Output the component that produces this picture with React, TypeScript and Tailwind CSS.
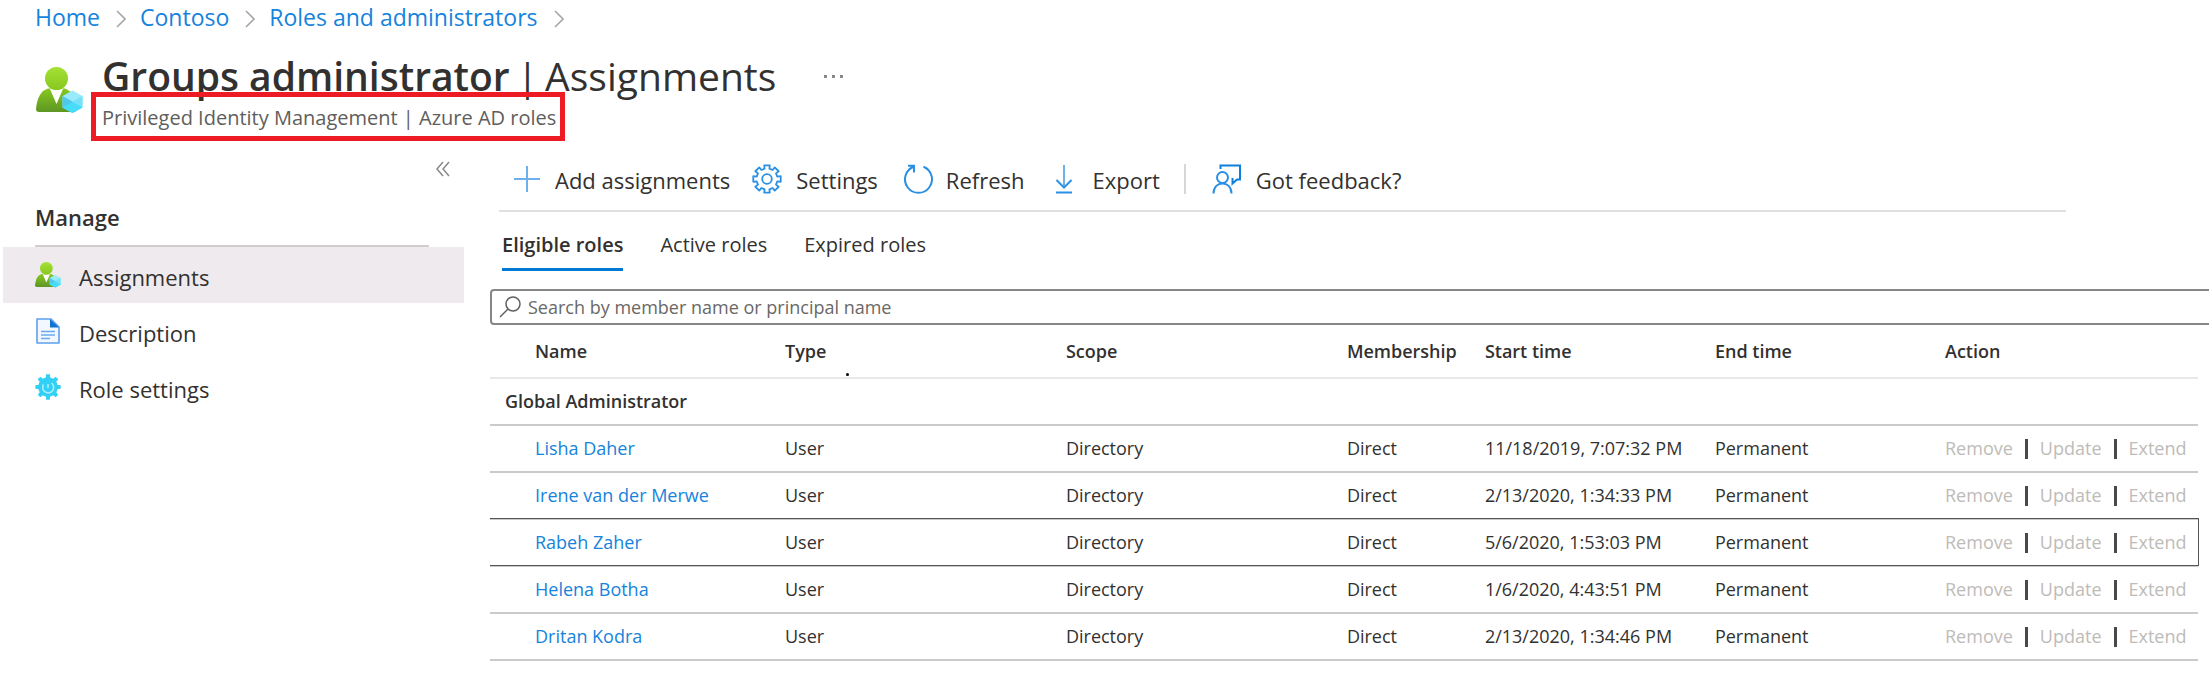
import type { ReactNode } from "react";

const crumbs = ["Home", "Contoso", "Roles and administrators"];

const members = [
  { name: "Lisha Daher", start: "11/18/2019, 7:07:32 PM" },
  { name: "Irene van der Merwe", start: "2/13/2020, 1:34:33 PM" },
  { name: "Rabeh Zaher", start: "5/6/2020, 1:53:03 PM", focused: true },
  { name: "Helena Botha", start: "1/6/2020, 4:43:51 PM" },
  { name: "Dritan Kodra", start: "2/13/2020, 1:34:46 PM" },
];

function gearPath(teeth: number, outer: number, inner: number, c: number, half: number, slope: number) {
  const pts: string[] = [];
  for (let i = 0; i < teeth; i++) {
    const a = (i * 2 * Math.PI) / teeth - Math.PI / 2;
    const at = (r: number, t: number) => `${(c + r * Math.cos(t)).toFixed(2)} ${(c + r * Math.sin(t)).toFixed(2)}`;
    pts.push(at(inner, a - half - slope), at(outer, a - half), at(outer, a + half), at(inner, a + half + slope));
  }
  return `M${pts.join("L")}Z`;
}

function PersonIcon({ id, className }: { id: string; className: string }) {
  return (
    <svg viewBox="0 0 47 47" className={className} aria-hidden="true">
      <defs>
        <linearGradient id={id} x1="0" y1="0" x2="0" y2="1">
          <stop offset="0" stopColor="#86c81f" />
          <stop offset="1" stopColor="#5e9624" />
        </linearGradient>
        <linearGradient id={`${id}-head`} x1="0" y1="0" x2="0" y2="1">
          <stop offset="0" stopColor="#a6e035" />
          <stop offset="1" stopColor="#86c81f" />
        </linearGradient>
      </defs>
      <path d="M0 42C1 32 4 24 12 21.500H29C36 24 40 32 41 42Q41 45 38 45H3Q0 45 0 42Z" fill={`url(#${id})`} />
      <path d="M14 22H27L20.500 37Z" fill="#fff" />
      <circle cx="20.500" cy="11.500" r="11.500" fill={`url(#${id}-head)`} />
      <path d="M36.500 23.500L46.500 29V40.500L36.500 46L26.500 40.500V29Z" fill="#9aeaf9" />
      <path d="M26.500 29L36.500 34.500V46L26.500 40.500Z" fill="#50c8ec" />
      <path d="M36.500 34.500L46.500 29V40.500L36.500 46Z" fill="#74e2f8" />
      <path d="M26.500 40.500L36.500 35L46.500 40.500L36.500 46Z" fill="#46dcfa" />
    </svg>
  );
}

function Chevron() {
  return (
    <svg viewBox="0 0 10 18" className="ml-4 mr-3.5 mt-1 h-[18px] w-2.5" fill="none" stroke="#a8a6a4" strokeWidth="1.600" aria-hidden="true">
      <path d="M1 1L9 9L1 17" />
    </svg>
  );
}

function Tool({ icon, label, className = "" }: { icon: ReactNode; label: string; className?: string }) {
  return (
    <button type="button" className={`flex items-center text-[22px] leading-8 whitespace-nowrap ${className}`}>
      {icon}
      <span className="mt-0.5">{label}</span>
    </button>
  );
}

const stroke = { fill: "none", stroke: "#2b8fe3", strokeWidth: 2, "aria-hidden": true } as const;

export default function App() {
  return (
    <div className="overflow-x-hidden bg-white font-['Open_Sans','Noto_Sans',sans-serif] text-[#323130]">
      <nav aria-label="Breadcrumb" className="flex items-center pl-[35px] text-[23px] leading-[34px] text-[#1683dc]">
        {crumbs.map((c) => (
          <span key={c} className="flex items-center">
            <a href="#">{c}</a>
            <Chevron />
          </span>
        ))}
      </nav>

      <header className="flex pl-9 pt-[17px]">
        <PersonIcon id="person-large" className="mt-4 size-[47px] shrink-0" />
        <div className="ml-2">
          <div className="flex items-center pl-[11px]">
            <h1 className="flex gap-[7px] text-[39px] leading-[50px] whitespace-nowrap">
              <span className="font-semibold">Groups administrator</span>
              <span>|</span>
              <span>Assignments</span>
            </h1>
            <button type="button" aria-label="More" className="ml-12 flex gap-[5px]">
              <span className="size-[3px] bg-[#8a8886]" />
              <span className="size-[3px] bg-[#8a8886]" />
              <span className="size-[3px] bg-[#8a8886]" />
            </button>
          </div>
          <p className="relative -mt-[9px] h-[49px] w-max border-[5px] border-[#ed1c24] pr-1 pl-1.5 text-[20px] leading-[41px] text-[#605e5c]">
            Privileged Identity Management | Azure AD roles
          </p>
        </div>
      </header>

      <div className="flex">
        <aside className="w-[464px] shrink-0 pl-[3px]">
          <div className="flex h-[58px] justify-end pr-3.5 pt-5">
            <button type="button" aria-label="Collapse menu" className="h-4 w-3.5">
              <svg viewBox="0 0 14 16" className="h-4 w-3.5" fill="none" stroke="#8a8886" strokeWidth="1.500" aria-hidden="true">
                <path d="M7 1L1 8L7 15M13 1L7 8L13 15" />
              </svg>
            </button>
          </div>
          <h2 className="ml-8 mr-[35px] h-12 border-b-2 border-[#cfcdcd] text-[22px] leading-9 font-semibold">Manage</h2>
          <nav aria-label="Manage" className="text-[22px]">
            <a href="#" aria-current="page" className="flex h-14 items-center gap-[18px] bg-[#efeaee] pl-8">
              <PersonIcon id="person-small" className="size-[26px]" />
              <span className="mt-1">Assignments</span>
            </a>
            <a href="#" className="flex h-14 items-center gap-[18px] pl-8">
              <svg viewBox="0 0 26 26" className="size-[26px]" aria-hidden="true">
                <path d="M2 1H16L24 9V25H2Z" fill="#f3f8fe" stroke="#5ea0ef" strokeWidth="1.600" strokeLinejoin="round" />
                <path d="M15 1L24 9.500H15Z" fill="#1071d0" />
                <path d="M6 13.500H20M6 17H20M6 20.500H15" stroke="#6aaaf2" strokeWidth="1.600" />
              </svg>
              <span className="mt-1">Description</span>
            </a>
            <a href="#" className="flex h-14 items-center gap-[18px] pl-8">
              <svg viewBox="0 0 26 26" className="size-[26px]" aria-hidden="true">
                <path d={gearPath(8, 12.8, 9, 13, 0.14, 0.12)} fill="#32d0f5" />
                <circle cx="13" cy="13" r="9.800" fill="#32d0f5" />
                <path d="M8.500 10.500A5.500 5.500 0 1 0 16.500 9M13 10V14" fill="none" stroke="#b4eefb" strokeWidth="1.500" />
              </svg>
              <span className="mt-1">Role settings</span>
            </a>
          </nav>
        </aside>

        <main className="ml-[26px] min-w-0 flex-1">
          <div className="ml-[9px] mr-[143px] flex h-[71px] items-center border-b-2 border-[#e1dfdf] pl-3.5 pt-1.5">
            <Tool
              label="Add assignments"
              icon={
                <svg viewBox="0 0 28 28" className="mr-3.5 size-7" {...stroke} stroke="#6cb0ee">
                  <path d="M14 1V27M1 14H27" />
                </svg>
              }
            />
            <Tool
              className="ml-[22px]"
              label="Settings"
              icon={
                <svg viewBox="0 0 30 30" className="mr-3.5 size-[30px]" {...stroke} strokeWidth={1.8} strokeLinejoin="round">
                  <path d={gearPath(8, 14, 10.6, 15, 0.2, 0.03)} />
                  <circle cx="15" cy="15" r="4.800" />
                </svg>
              }
            />
            <Tool
              className="ml-[26px]"
              label="Refresh"
              icon={
                <svg viewBox="0 0 30 30" className="mr-3 size-[30px]" {...stroke}>
                  <path d="M19.500 2.800A13.500 13.500 0 1 1 9.500 2.800M4 1.800H10V8.500" />
                </svg>
              }
            />
            <Tool
              className="ml-[30px]"
              label="Export"
              icon={
                <svg viewBox="0 0 18 30" className="mr-5 h-[30px] w-[18px]" {...stroke}>
                  <path d="M9 1V23" stroke="#6cb0ee" />
                  <path d="M1.500 16L9 23.500L16.500 16M1 28.500H17" />
                </svg>
              }
            />
            <span className="mr-[26px] ml-6 h-[30px] w-0.5 shrink-0 bg-[#dad6d3]" />
            <Tool
              label="Got feedback?"
              icon={
                <svg viewBox="0 0 30 30" className="mr-3.5 size-[30px]" {...stroke}>
                  <path d="M8.500 5V1.500H28V15.500H25L20.500 19.500V14" stroke="#0f7fdc" />
                  <circle cx="10.500" cy="13.500" r="5.500" />
                  <path d="M1.500 29.500C1.500 16 19.500 16 19.500 29.500" />
                </svg>
              }
            />
          </div>

          <div role="tablist" className="ml-3 flex gap-[37px] pt-[17px] text-[20px] leading-8">
            <button type="button" role="tab" aria-selected="true" className="h-[42px] border-b-3 border-[#0078d4] pb-[7px] font-semibold">
              Eligible roles
            </button>
            <button type="button" role="tab" aria-selected="false" className="h-[42px] pb-2.5">
              Active roles
            </button>
            <button type="button" role="tab" aria-selected="false" className="h-[42px] pb-2.5">
              Expired roles
            </button>
          </div>

          <label className="mt-[18px] -mr-1 flex h-9 items-center rounded-sm border-2 border-[#868686] pl-[7px]">
            <svg viewBox="0 0 22 22" className="mr-[7px] size-[22px] shrink-0" fill="none" stroke="#605e5c" strokeWidth="1.500" aria-hidden="true">
              <circle cx="14" cy="8" r="7" />
              <path d="M9 13L1 21" />
            </svg>
            <input
              type="text"
              aria-label="Search members"
              placeholder="Search by member name or principal name"
              className="w-full min-w-0 text-[18px] outline-none placeholder:text-[#6a6866]"
            />
          </label>

          <div className="relative mr-[11px]">
            <table className="w-full table-fixed border-collapse text-left text-[18px] whitespace-nowrap">
              <colgroup>
                <col className="w-[17.270%]" />
                <col className="w-[16.450%]" />
                <col className="w-[16.450%]" />
                <col className="w-[8.080%]" />
                <col className="w-[13.470%]" />
                <col className="w-[13.470%]" />
                <col />
              </colgroup>
              <thead>
                <tr className="h-[53px] border-b-2 border-[#e9e9e9]">
                  <th className="pl-[45px] font-semibold">Name</th>
                  <th className="font-semibold">Type</th>
                  <th className="font-semibold">Scope</th>
                  <th className="font-semibold">Membership</th>
                  <th className="font-semibold">Start time</th>
                  <th className="font-semibold">End time</th>
                  <th className="font-semibold">Action</th>
                </tr>
              </thead>
              <tbody>
                <tr className="h-[47px] border-b-2 border-[#cacaca]">
                  <th colSpan={7} className="pl-[15px] font-semibold">
                    Global Administrator
                  </th>
                </tr>
                {members.map((m) => (
                  <tr key={m.name} className="relative h-[47px] border-b-2 border-[#cacaca]">
                    <td className="pl-[45px]">
                      {m.focused && <span className="pointer-events-none absolute -top-px -right-px -bottom-0.5 left-0 border-y border-r border-[#555]" />}
                      <a href="#" className="text-[#1683dc]">
                        {m.name}
                      </a>
                    </td>
                    <td>User</td>
                    <td>Directory</td>
                    <td>Direct</td>
                    <td>{m.start}</td>
                    <td>Permanent</td>
                    <td>
                      <span className="flex items-center gap-3">
                        <button type="button" disabled className="text-[#bebbb8]">
                          Remove
                        </button>
                        <span className="h-5 w-[3px] bg-[#4a4948]" />
                        <button type="button" disabled className="text-[#bebbb8]">
                          Update
                        </button>
                        <span className="h-5 w-[3px] bg-[#4a4948]" />
                        <button type="button" disabled className="text-[#bebbb8]">
                          Extend
                        </button>
                      </span>
                    </td>
                  </tr>
                ))}
              </tbody>
            </table>
            <span className="absolute top-12 left-[356px] size-[3px] rounded-full bg-black" />
          </div>
        </main>
      </div>
    </div>
  );
}
